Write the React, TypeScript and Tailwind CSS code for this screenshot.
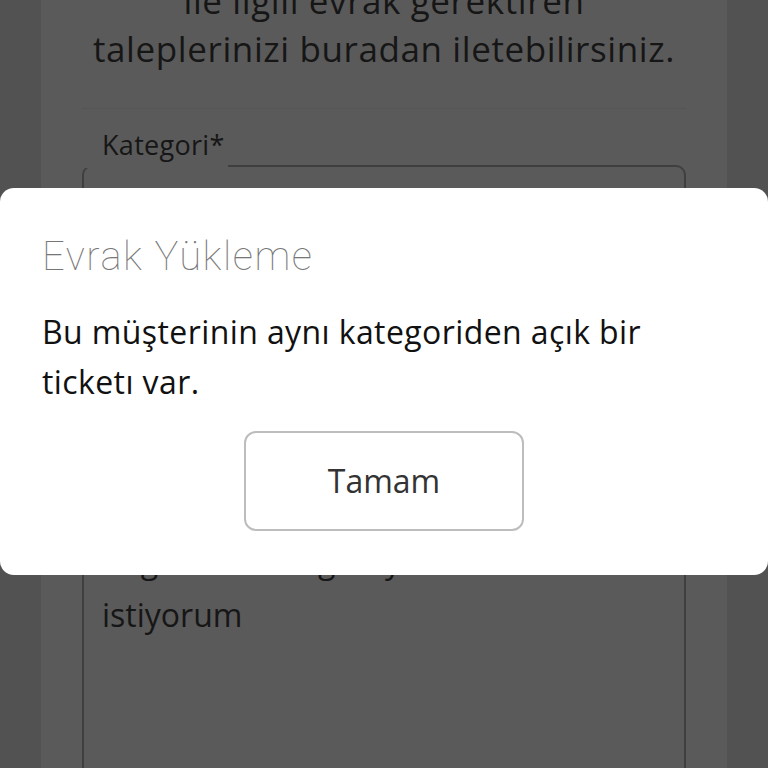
import React from 'react';

const FONT = { fontFamily: '"Open Sans", "Noto Sans", sans-serif' };
const THIN = { fontFamily: 'Roboto, "Noto Sans", sans-serif' };

function BackgroundForm() {
  return (
    <div className="h-full mx-[41px] bg-[#5a5a5a] px-[41px] overflow-hidden">
      <p className="-mt-[23px] text-center text-[35px] leading-[48px] tracking-[0.6px] text-[#161616]">
        ile ilgili evrak gerektiren
        <br />
        taleplerinizi buradan iletebilirsiniz.
      </p>
      <div className="mt-[35px] h-px bg-[#555555]" />

      <div className="mt-[19px] pl-[20px] text-[27px] leading-[34px] tracking-[0.3px] text-[#161616]">Kategori*</div>

      {/* outlined select, mostly covered by the dialog */}
      <div className="relative mt-[3px] h-[60px] rounded-t-[10px] border-x-2 border-t-2 border-[#3f3f3f]">
        <div className="absolute -top-[2px] left-0 h-[3px] w-[144px] bg-[#5a5a5a]" />
      </div>

      {/* textarea */}
      <div className="mt-[340px] h-[400px] border-x-2 border-[#3f3f3f] px-[18px]">
        <p className="-mt-[31px] text-[32px] leading-[54px] text-[#161616]">
          doğrulama belgesi yüklemek
          <br />
          istiyorum
        </p>
      </div>
    </div>
  );
}

export default function App() {
  return (
    <div className="relative h-[768px] w-[768px] overflow-hidden bg-[#525252]" style={FONT}>
      <BackgroundForm />

      <div className="absolute left-0 right-0 top-[188px] h-[387px] rounded-[14px] bg-white px-[42px] pt-[44px]">
        <h2 className="text-[40px] font-thin leading-[50px] tracking-[1.5px] text-[#777777]" style={THIN}>
          Evrak Yükleme
        </h2>
        <p className="mt-[25px] pr-[60px] text-[32px] leading-[50px] tracking-[0.4px] text-[#111111]">
          Bu müşterinin aynı kategoriden açık bir ticketı var.
        </p>
        <div className="mt-[24px] flex justify-center">
          <button
            type="button"
            className="h-[100px] w-[280px] rounded-[12px] border-2 border-[#bdbdbd] bg-white text-[32px] text-[#333333]"
          >
            Tamam
          </button>
        </div>
      </div>
    </div>
  );
}
